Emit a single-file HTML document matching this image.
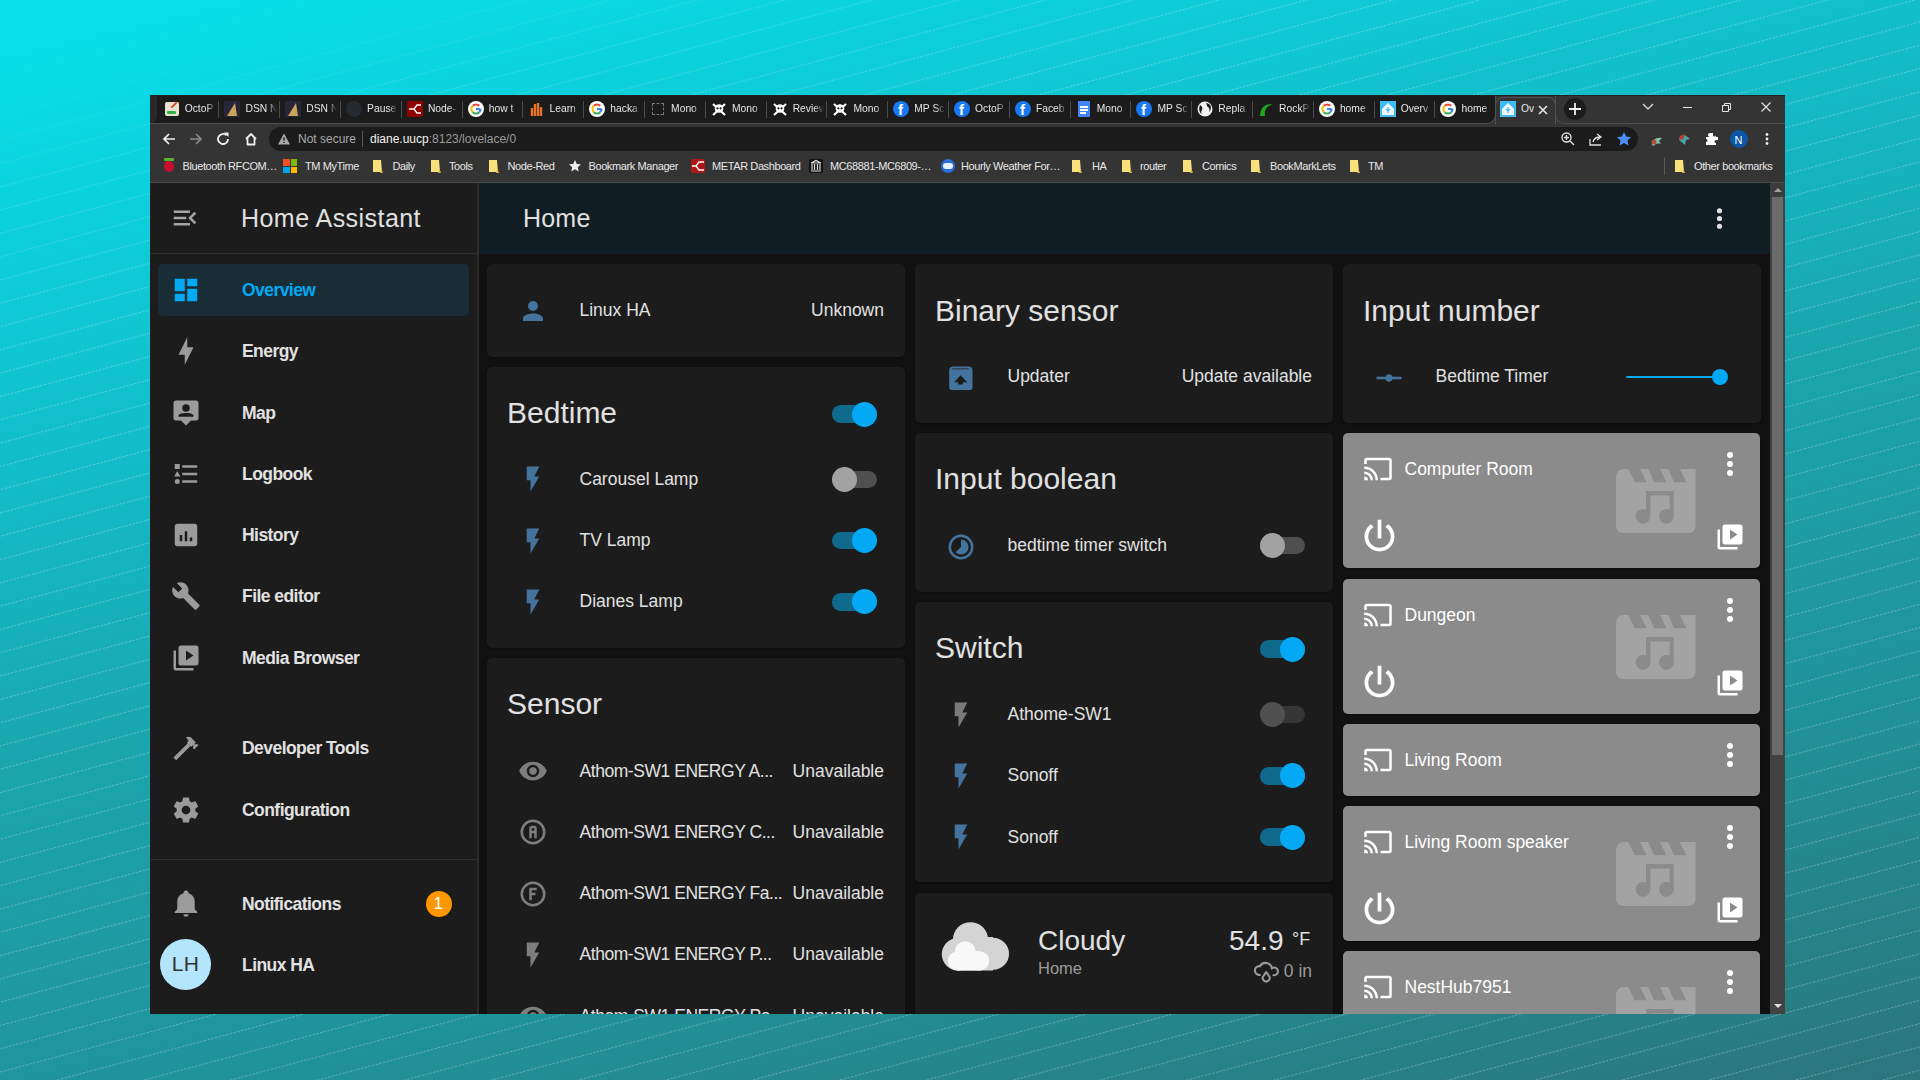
<!DOCTYPE html>
<html><head><meta charset="utf-8">
<style>
*{box-sizing:border-box;margin:0;padding:0}
html,body{width:1920px;height:1080px;overflow:hidden}
body{position:relative;font-family:"Liberation Sans",sans-serif;
background:linear-gradient(167deg,#07e1eb 0%,#08dde8 5%,#0fcad5 20%,#14b8c4 35.4%,#1aa6ae 50%,#1f9aa1 64.6%,#1f959d 71%,#2b767c 100%);}
.a{position:absolute}
.t{white-space:nowrap}
#lines{position:absolute;left:0;top:0;-webkit-mask-image:linear-gradient(165deg,transparent 5%,rgba(0,0,0,.6) 12%,#000 25%);mask-image:linear-gradient(165deg,transparent 5%,rgba(0,0,0,.6) 12%,#000 25%)}
#clip{position:absolute;left:0;top:0;width:1920px;height:1080px;clip-path:inset(183px 135px 66px 150px)}
</style></head><body>
<svg id="lines" width="1920" height="1080"><defs><pattern id="pl" width="3.8" height="22.5" patternUnits="userSpaceOnUse" patternTransform="rotate(-15)"><rect x="0" y="0" width="2.4" height="1.1" fill="rgba(255,255,255,0.27)"/></pattern></defs><rect width="1920" height="1080" fill="url(#pl)"/></svg>
<div class="a" style="left:150px;top:95px;width:1635px;height:919px;background:#343434;border-radius:0px;"></div><div class="a" style="left:150px;top:95px;width:1635px;height:1px;background:#2a1f1f;border-radius:0px;"></div><div class="a" style="left:150px;top:96px;width:1635px;height:28px;background:#343434;border-radius:0px;"></div><div class="a" style="left:150px;top:95px;width:1346px;height:29px;background:#1b1b1b;border-right:1px solid #505050;border-bottom:1px solid #505050;border-radius:0 0 9px 0"></div><div class="a" style="left:150px;top:95px;width:7px;height:28px;background:#2a2a2a;border-radius:0px;border-radius:0 0 7px 0"></div><div class="a" style="left:1555px;top:95px;width:230px;height:29px;background:#343434;border-left:1px solid #505050;border-bottom:1px solid #505050;border-radius:0 0 0 9px"></div><div class="a" style="left:1495px;top:97px;width:61px;height:27px;background:#343434;border:1px solid #505050;border-bottom:none;border-radius:8px 8px 0 0"></div><div class="a" style="left:150px;top:95px;width:1635px;height:1px;background:#2a1f1f;border-radius:0px;"></div><div class="a" style="left:165px;top:102px;width:14px;height:14px;background:#e8e2d0;border-radius:2px;"></div><div class="a" style="left:167px;top:111px;width:9px;height:3px;background:#2db34a;border-radius:1px;"></div><div class="a" style="left:170px;top:104px;width:8px;height:2px;background:#e24a2a;border-radius:1px;transform:rotate(-45deg)"></div><div class="a t" style="left:184.7px;top:103px;width:31px;overflow:hidden;font-size:10.3px;line-height:12px;color:#e6e6e6;-webkit-mask-image:linear-gradient(90deg,#000 70%,transparent)">OctoP</div><div class="a" style="left:218px;top:101px;width:1px;height:17px;background:#4a4a4a;border-radius:0px;"></div><div class="a" style="left:224px;top:101px;width:16px;height:16px;background:#2a2438;border-radius:1px;"></div><svg class="a" style="left:224px;top:101px" width="16" height="16"><path d="M3 15L11 2L13 15Z" fill="#c9a55a"/></svg><div class="a t" style="left:245.5px;top:103px;width:31px;overflow:hidden;font-size:10.3px;line-height:12px;color:#e6e6e6;-webkit-mask-image:linear-gradient(90deg,#000 70%,transparent)">DSN N</div><div class="a" style="left:279px;top:101px;width:1px;height:17px;background:#4a4a4a;border-radius:0px;"></div><div class="a" style="left:285px;top:101px;width:16px;height:16px;background:#2a2438;border-radius:1px;"></div><svg class="a" style="left:285px;top:101px" width="16" height="16"><path d="M3 15L11 2L13 15Z" fill="#c9a55a"/></svg><div class="a t" style="left:306.3px;top:103px;width:31px;overflow:hidden;font-size:10.3px;line-height:12px;color:#e6e6e6;-webkit-mask-image:linear-gradient(90deg,#000 70%,transparent)">DSN N</div><div class="a" style="left:340px;top:101px;width:1px;height:17px;background:#4a4a4a;border-radius:0px;"></div><div class="a" style="left:346px;top:101px;width:16px;height:16px;border-radius:8px;background:#242a30"></div><div class="a t" style="left:367.1px;top:103px;width:31px;overflow:hidden;font-size:10.3px;line-height:12px;color:#e6e6e6;-webkit-mask-image:linear-gradient(90deg,#000 70%,transparent)">Pause</div><div class="a" style="left:401px;top:101px;width:1px;height:17px;background:#4a4a4a;border-radius:0px;"></div><div class="a" style="left:407px;top:101px;width:16px;height:16px;background:#8f0000;border-radius:1px;"></div><svg class="a" style="left:407px;top:101px" width="16" height="16"><path d="M2 8H7L10 4H14M7 8L10 12H14" stroke="#fff" stroke-width="1.3" fill="none"/></svg><div class="a t" style="left:427.9px;top:103px;width:31px;overflow:hidden;font-size:10.3px;line-height:12px;color:#e6e6e6;-webkit-mask-image:linear-gradient(90deg,#000 70%,transparent)">Node-</div><div class="a" style="left:462px;top:101px;width:1px;height:17px;background:#4a4a4a;border-radius:0px;"></div><svg class="a" style="left:468px;top:101px" width="16" height="16" viewBox="0 0 16 16"><circle cx="8" cy="8" r="8" fill="#fff"/><g fill="none" stroke-width="2.2"><path d="M4.82 4.82A4.5 4.5 0 0 1 11.18 4.82" stroke="#ea4335"/><path d="M4.82 11.18A4.5 4.5 0 0 1 4.82 4.82" stroke="#fbbc05"/><path d="M11.18 11.18A4.5 4.5 0 0 1 4.82 11.18" stroke="#34a853"/><path d="M12.5 8A4.5 4.5 0 0 1 11.18 11.18M8 8H12.5" stroke="#4285f4"/></g></svg><div class="a t" style="left:488.7px;top:103px;width:31px;overflow:hidden;font-size:10.3px;line-height:12px;color:#e6e6e6;-webkit-mask-image:linear-gradient(90deg,#000 70%,transparent)">how t</div><div class="a" style="left:522px;top:101px;width:1px;height:17px;background:#4a4a4a;border-radius:0px;"></div><svg class="a" style="left:528px;top:101px" width="16" height="16"><path d="M4 15V7M7 15V3M10 15V2M13 15V6" stroke="#e8742a" stroke-width="2.4"/></svg><div class="a t" style="left:549.5px;top:103px;width:31px;overflow:hidden;font-size:10.3px;line-height:12px;color:#e6e6e6;-webkit-mask-image:linear-gradient(90deg,#000 70%,transparent)">Learn</div><div class="a" style="left:583px;top:101px;width:1px;height:17px;background:#4a4a4a;border-radius:0px;"></div><svg class="a" style="left:589px;top:101px" width="16" height="16" viewBox="0 0 16 16"><circle cx="8" cy="8" r="8" fill="#fff"/><g fill="none" stroke-width="2.2"><path d="M4.82 4.82A4.5 4.5 0 0 1 11.18 4.82" stroke="#ea4335"/><path d="M4.82 11.18A4.5 4.5 0 0 1 4.82 4.82" stroke="#fbbc05"/><path d="M11.18 11.18A4.5 4.5 0 0 1 4.82 11.18" stroke="#34a853"/><path d="M12.5 8A4.5 4.5 0 0 1 11.18 11.18M8 8H12.5" stroke="#4285f4"/></g></svg><div class="a t" style="left:610.3px;top:103px;width:31px;overflow:hidden;font-size:10.3px;line-height:12px;color:#e6e6e6;-webkit-mask-image:linear-gradient(90deg,#000 70%,transparent)">hacka</div><div class="a" style="left:644px;top:101px;width:1px;height:17px;background:#4a4a4a;border-radius:0px;"></div><div class="a" style="left:652px;top:103px;width:12px;height:12px;border:1px dashed #777"></div><div class="a t" style="left:671.1px;top:103px;width:31px;overflow:hidden;font-size:10.3px;line-height:12px;color:#e6e6e6;-webkit-mask-image:linear-gradient(90deg,#000 70%,transparent)">Mono</div><div class="a" style="left:705px;top:101px;width:1px;height:17px;background:#4a4a4a;border-radius:0px;"></div><svg class="a" style="left:711px;top:101px" width="16" height="16" viewBox="0 0 16 16"><path d="M2 3L14 14M14 3L2 14" stroke="#fff" stroke-width="2.2"/><circle cx="8" cy="7.5" r="4.3" fill="#fff"/><circle cx="6.4" cy="7.3" r="1.1" fill="#1b1b1b"/><circle cx="9.6" cy="7.3" r="1.1" fill="#1b1b1b"/></svg><div class="a t" style="left:731.9px;top:103px;width:31px;overflow:hidden;font-size:10.3px;line-height:12px;color:#e6e6e6;-webkit-mask-image:linear-gradient(90deg,#000 70%,transparent)">Mono</div><div class="a" style="left:766px;top:101px;width:1px;height:17px;background:#4a4a4a;border-radius:0px;"></div><svg class="a" style="left:772px;top:101px" width="16" height="16" viewBox="0 0 16 16"><path d="M2 3L14 14M14 3L2 14" stroke="#fff" stroke-width="2.2"/><circle cx="8" cy="7.5" r="4.3" fill="#fff"/><circle cx="6.4" cy="7.3" r="1.1" fill="#1b1b1b"/><circle cx="9.6" cy="7.3" r="1.1" fill="#1b1b1b"/></svg><div class="a t" style="left:792.7px;top:103px;width:31px;overflow:hidden;font-size:10.3px;line-height:12px;color:#e6e6e6;-webkit-mask-image:linear-gradient(90deg,#000 70%,transparent)">Review</div><div class="a" style="left:826px;top:101px;width:1px;height:17px;background:#4a4a4a;border-radius:0px;"></div><svg class="a" style="left:832px;top:101px" width="16" height="16" viewBox="0 0 16 16"><path d="M2 3L14 14M14 3L2 14" stroke="#fff" stroke-width="2.2"/><circle cx="8" cy="7.5" r="4.3" fill="#fff"/><circle cx="6.4" cy="7.3" r="1.1" fill="#1b1b1b"/><circle cx="9.6" cy="7.3" r="1.1" fill="#1b1b1b"/></svg><div class="a t" style="left:853.5px;top:103px;width:31px;overflow:hidden;font-size:10.3px;line-height:12px;color:#e6e6e6;-webkit-mask-image:linear-gradient(90deg,#000 70%,transparent)">Mono</div><div class="a" style="left:887px;top:101px;width:1px;height:17px;background:#4a4a4a;border-radius:0px;"></div><div class="a" style="left:893px;top:101px;width:16px;height:16px;border-radius:8px;background:#1877f2"></div><div class="a t" style="left:898px;top:102px;font-size:15px;line-height:16px;font-weight:700;color:#fff">f</div><div class="a t" style="left:914.3px;top:103px;width:31px;overflow:hidden;font-size:10.3px;line-height:12px;color:#e6e6e6;-webkit-mask-image:linear-gradient(90deg,#000 70%,transparent)">MP Sc</div><div class="a" style="left:948px;top:101px;width:1px;height:17px;background:#4a4a4a;border-radius:0px;"></div><div class="a" style="left:954px;top:101px;width:16px;height:16px;border-radius:8px;background:#1877f2"></div><div class="a t" style="left:959px;top:102px;font-size:15px;line-height:16px;font-weight:700;color:#fff">f</div><div class="a t" style="left:975.1px;top:103px;width:31px;overflow:hidden;font-size:10.3px;line-height:12px;color:#e6e6e6;-webkit-mask-image:linear-gradient(90deg,#000 70%,transparent)">OctoP</div><div class="a" style="left:1009px;top:101px;width:1px;height:17px;background:#4a4a4a;border-radius:0px;"></div><div class="a" style="left:1015px;top:101px;width:16px;height:16px;border-radius:8px;background:#1877f2"></div><div class="a t" style="left:1020px;top:102px;font-size:15px;line-height:16px;font-weight:700;color:#fff">f</div><div class="a t" style="left:1035.9px;top:103px;width:31px;overflow:hidden;font-size:10.3px;line-height:12px;color:#e6e6e6;-webkit-mask-image:linear-gradient(90deg,#000 70%,transparent)">Faceb</div><div class="a" style="left:1070px;top:101px;width:1px;height:17px;background:#4a4a4a;border-radius:0px;"></div><div class="a" style="left:1078px;top:101px;width:12px;height:16px;background:#4285f4;border-radius:1px;"></div><div class="a" style="left:1080px;top:106px;width:8px;height:1.5px;background:#fff;border-radius:0px;"></div><div class="a" style="left:1080px;top:109px;width:8px;height:1.5px;background:#fff;border-radius:0px;"></div><div class="a" style="left:1080px;top:112px;width:6px;height:1.5px;background:#fff;border-radius:0px;"></div><div class="a t" style="left:1096.7px;top:103px;width:31px;overflow:hidden;font-size:10.3px;line-height:12px;color:#e6e6e6;-webkit-mask-image:linear-gradient(90deg,#000 70%,transparent)">Mono</div><div class="a" style="left:1130px;top:101px;width:1px;height:17px;background:#4a4a4a;border-radius:0px;"></div><div class="a" style="left:1136px;top:101px;width:16px;height:16px;border-radius:8px;background:#1877f2"></div><div class="a t" style="left:1141px;top:102px;font-size:15px;line-height:16px;font-weight:700;color:#fff">f</div><div class="a t" style="left:1157.5px;top:103px;width:31px;overflow:hidden;font-size:10.3px;line-height:12px;color:#e6e6e6;-webkit-mask-image:linear-gradient(90deg,#000 70%,transparent)">MP Sc</div><div class="a" style="left:1191px;top:101px;width:1px;height:17px;background:#4a4a4a;border-radius:0px;"></div><svg class="a" style="left:1197px;top:101px" width="16" height="16" viewBox="0 0 16 16"><circle cx="8" cy="8" r="7.5" fill="#f2f2f2"/><path d="M3 4C5 5 6 7 5 9C4 10 4 12 5 13.5C3 12 1.5 9 2.5 5.5ZM9 2C10 3.5 9.5 5 11 6C12.5 7 13 9 12 11C13.5 10 14.5 7 13.5 4.5C12.5 3 11 2.2 9 2Z" fill="#1b1b1b"/></svg><div class="a t" style="left:1218.3px;top:103px;width:31px;overflow:hidden;font-size:10.3px;line-height:12px;color:#e6e6e6;-webkit-mask-image:linear-gradient(90deg,#000 70%,transparent)">Repla</div><div class="a" style="left:1252px;top:101px;width:1px;height:17px;background:#4a4a4a;border-radius:0px;"></div><svg class="a" style="left:1258px;top:101px" width="16" height="16"><path d="M2 15C2 6 9 1 15 4C9 4 6 9 7 15Z" fill="#1fa51f"/></svg><div class="a t" style="left:1279.1px;top:103px;width:31px;overflow:hidden;font-size:10.3px;line-height:12px;color:#e6e6e6;-webkit-mask-image:linear-gradient(90deg,#000 70%,transparent)">RockP</div><div class="a" style="left:1313px;top:101px;width:1px;height:17px;background:#4a4a4a;border-radius:0px;"></div><svg class="a" style="left:1319px;top:101px" width="16" height="16" viewBox="0 0 16 16"><circle cx="8" cy="8" r="8" fill="#fff"/><g fill="none" stroke-width="2.2"><path d="M4.82 4.82A4.5 4.5 0 0 1 11.18 4.82" stroke="#ea4335"/><path d="M4.82 11.18A4.5 4.5 0 0 1 4.82 4.82" stroke="#fbbc05"/><path d="M11.18 11.18A4.5 4.5 0 0 1 4.82 11.18" stroke="#34a853"/><path d="M12.5 8A4.5 4.5 0 0 1 11.18 11.18M8 8H12.5" stroke="#4285f4"/></g></svg><div class="a t" style="left:1339.9px;top:103px;width:31px;overflow:hidden;font-size:10.3px;line-height:12px;color:#e6e6e6;-webkit-mask-image:linear-gradient(90deg,#000 70%,transparent)">home</div><div class="a" style="left:1374px;top:101px;width:1px;height:17px;background:#4a4a4a;border-radius:0px;"></div><div class="a" style="left:1380px;top:101px;width:16px;height:16px;background:#41bdf5;border-radius:0px;"></div><svg class="a" style="left:1380px;top:101px" width="16" height="16"><path d="M8 2L14 8V14H2V8Z" fill="#f1f9ff"/><path d="M8 6V12M6 8L8 10L10 8" stroke="#41bdf5" stroke-width="1.2" fill="none"/></svg><div class="a t" style="left:1400.7px;top:103px;width:31px;overflow:hidden;font-size:10.3px;line-height:12px;color:#e6e6e6;-webkit-mask-image:linear-gradient(90deg,#000 70%,transparent)">Overv</div><div class="a" style="left:1434px;top:101px;width:1px;height:17px;background:#4a4a4a;border-radius:0px;"></div><svg class="a" style="left:1440px;top:101px" width="16" height="16" viewBox="0 0 16 16"><circle cx="8" cy="8" r="8" fill="#fff"/><g fill="none" stroke-width="2.2"><path d="M4.82 4.82A4.5 4.5 0 0 1 11.18 4.82" stroke="#ea4335"/><path d="M4.82 11.18A4.5 4.5 0 0 1 4.82 4.82" stroke="#fbbc05"/><path d="M11.18 11.18A4.5 4.5 0 0 1 4.82 11.18" stroke="#34a853"/><path d="M12.5 8A4.5 4.5 0 0 1 11.18 11.18M8 8H12.5" stroke="#4285f4"/></g></svg><div class="a t" style="left:1461.5px;top:103px;width:31px;overflow:hidden;font-size:10.3px;line-height:12px;color:#e6e6e6;-webkit-mask-image:linear-gradient(90deg,#000 70%,transparent)">home</div><div class="a" style="left:1500px;top:101px;width:16px;height:16px;background:#41bdf5;border-radius:0px;"></div><svg class="a" style="left:1500px;top:101px" width="16" height="16"><path d="M8 2L14 8V14H2V8Z" fill="#f1f9ff"/><path d="M8 6V12M6 8L8 10L10 8" stroke="#41bdf5" stroke-width="1.2" fill="none"/></svg><div class="a t" style="left:1521px;top:103px;width:13px;overflow:hidden;font-size:10.3px;line-height:12px;color:#e6e6e6">Ov</div><svg class="a" style="left:1536.50px;top:103.50px;" width="12" height="12" viewBox="0 0 12 12"><path d="M2 2L10 10M10 2L2 10" stroke="#e8e8e8" stroke-width="1.6"/></svg><div class="a" style="left:1563.5px;top:98px;width:22px;height:22px;background:#1b1b1b;border-radius:11px;"></div><svg class="a" style="left:1567.50px;top:102.00px;" width="14" height="14" viewBox="0 0 14 14"><path d="M7 1V13M1 7H13" stroke="#f0f0f0" stroke-width="1.8"/></svg><svg class="a" style="left:1641.50px;top:100.50px;" width="12" height="12" viewBox="0 0 12 12"><path d="M1 3L6 8L11 3" stroke="#d8d8d8" stroke-width="1.3" fill="none"/></svg><div class="a" style="left:1683px;top:107px;width:9px;height:1px;background:#e8e8e8;border-radius:0px;"></div><svg class="a" style="left:1720.00px;top:101.00px;" width="12" height="12" viewBox="0 0 12 12"><path d="M2.5 4.5H8.5V10.5H2.5Z M4.5 4.5V2.5H10.5V8.5H8.5" stroke="#e8e8e8" stroke-width="1" fill="none"/></svg><svg class="a" style="left:1759.50px;top:101.00px;" width="12" height="12" viewBox="0 0 12 12"><path d="M1.5 1.5L10.5 10.5M10.5 1.5L1.5 10.5" stroke="#e8e8e8" stroke-width="1.1"/></svg><svg class="a" style="left:161.00px;top:131.00px;" width="16" height="16" viewBox="0 0 16 16"><path d="M14 8H3M8 3L3 8L8 13" stroke="#f0f0f0" stroke-width="1.7" fill="none"/></svg><svg class="a" style="left:188.00px;top:131.00px;" width="16" height="16" viewBox="0 0 16 16"><path d="M2 8H13M8 3L13 8L8 13" stroke="#8a8a8a" stroke-width="1.7" fill="none"/></svg><svg class="a" style="left:215.00px;top:131.00px;" width="16" height="16" viewBox="0 0 16 16"><path d="M13 8A5 5 0 1 1 11.5 4.4" stroke="#f0f0f0" stroke-width="1.8" fill="none"/><path d="M9 1.5H13.5V6Z" fill="#f0f0f0"/></svg><svg class="a" style="left:242.50px;top:131.00px;" width="16" height="16" viewBox="0 0 16 16"><path d="M3 8L8 3L13 8M4.5 7V13.5H11.5V7" stroke="#f0f0f0" stroke-width="1.8" fill="none" stroke-linejoin="round"/></svg><div class="a" style="left:269px;top:127px;width:1369px;height:24px;background:#1b1b1b;border-radius:12px;"></div><svg class="a" style="left:277.00px;top:132.00px;" width="14" height="14" viewBox="0 0 14 14"><path d="M7 1.5L13 12.5H1Z" fill="#a8a8a8"/><path d="M7 5.5V8.5M7 10V11" stroke="#1e1e1e" stroke-width="1.5"/></svg><div class="a t" style="top:133.36px;font-size:12px;line-height:12px;color:#a9a9a9;font-weight:400;left:298px;">Not secure</div><div class="a" style="left:362px;top:131px;width:1px;height:16px;background:#5a5a5a;border-radius:0px;"></div><div class="a t" style="left:370px;top:133.3px;font-size:12px;line-height:12px;color:#f2f2f2">diane.uucp<span style="color:#9a9a9a">:8123/lovelace/0</span></div><svg class="a" style="left:1560.00px;top:131.00px;" width="16" height="16" viewBox="0 0 16 16"><circle cx="6.5" cy="6.5" r="4.5" stroke="#dedede" stroke-width="1.4" fill="none"/><path d="M10 10L14 14M6.5 4V9M4 6.5H9" stroke="#dedede" stroke-width="1.4"/></svg><svg class="a" style="left:1588.00px;top:131.00px;" width="16" height="16" viewBox="0 0 16 16"><path d="M2 8V14H13M5 11C6 7 9 6 12 6M9 3L13 6L9 9" stroke="#dedede" stroke-width="1.3" fill="none"/></svg><svg class="a" style="left:1615.50px;top:131.00px;" width="16" height="16" viewBox="0 0 16 16"><path d="M8 1L10.2 5.6L15 6.2L11.5 9.5L12.4 14.5L8 12L3.6 14.5L4.5 9.5L1 6.2L5.8 5.6Z" fill="#4e8cf7"/></svg><svg class="a" style="left:1648.50px;top:131.50px;" width="16" height="16" viewBox="0 0 16 16"><path d="M3 13C3 8 7 5 13 6L10 9L12 12C8 11 6 12 5 14Z" fill="#7cc4a8"/><circle cx="5" cy="10" r="2.5" fill="#b0503a"/></svg><svg class="a" style="left:1676.00px;top:131.00px;" width="16" height="16" viewBox="0 0 16 16"><path d="M3 9C3 5 6 3 9 4L14 8L10 9L9 14Z" fill="#4aa3a0"/><path d="M3 9C3 5 6 3 9 4L7 8Z" fill="#b83a2a"/></svg><svg class="a" style="left:1703.50px;top:131.00px;" width="16" height="16" viewBox="0 0 16 16"><path d="M6 2H9V4A1.5 1.5 0 0 0 12 4V6H14V9H12A1.5 1.5 0 0 0 12 12V14H2V11A1.5 1.5 0 0 0 2 8V6H6A1.5 1.5 0 0 1 6 2Z" fill="#fff"/></svg><div class="a" style="left:1730px;top:130px;width:18px;height:18px;background:#0b57a6;border-radius:9px;"></div><div class="a t" style="top:134.71px;font-size:11px;line-height:11px;color:#ffffff;font-weight:400;left:1734.5px;">N</div><svg class="a" style="left:1758.50px;top:131.00px;" width="16" height="16" viewBox="0 0 16 16"><circle cx="8" cy="3.5" r="1.4" fill="#eee"/><circle cx="8" cy="8" r="1.4" fill="#eee"/><circle cx="8" cy="12.5" r="1.4" fill="#eee"/></svg><div class="a" style="left:164px;top:161px;width:10px;height:11px;background:#c8102e;border-radius:5px;"></div><div class="a" style="left:164px;top:158px;width:10px;height:3px;background:#5bb12f;border-radius:1px;"></div><div class="a t" style="top:161.21px;font-size:11px;line-height:11px;color:#e8e8e8;font-weight:400;letter-spacing:-0.4px;left:182.5px;">Bluetooth RFCOM…</div><div class="a" style="left:283px;top:159px;width:6.5px;height:6.5px;background:#f25022;border-radius:0px;"></div><div class="a" style="left:290.5px;top:159px;width:6.5px;height:6.5px;background:#7fba00;border-radius:0px;"></div><div class="a" style="left:283px;top:166.5px;width:6.5px;height:6.5px;background:#00a4ef;border-radius:0px;"></div><div class="a" style="left:290.5px;top:166.5px;width:6.5px;height:6.5px;background:#ffb900;border-radius:0px;"></div><div class="a t" style="top:161.21px;font-size:11px;line-height:11px;color:#e8e8e8;font-weight:400;letter-spacing:-0.4px;left:305px;">TM MyTime</div><svg class="a" style="left:371px;top:159px" width="14" height="15" viewBox="0 0 14 15"><path d="M2 1H10L11 13H2Z" fill="#f9e07a"/><path d="M10.5 10L12 14H9Z" fill="#d9b94a"/></svg><div class="a t" style="top:161.21px;font-size:11px;line-height:11px;color:#e8e8e8;font-weight:400;letter-spacing:-0.4px;left:392.5px;">Daily</div><svg class="a" style="left:429px;top:159px" width="14" height="15" viewBox="0 0 14 15"><path d="M2 1H10L11 13H2Z" fill="#f9e07a"/><path d="M10.5 10L12 14H9Z" fill="#d9b94a"/></svg><div class="a t" style="top:161.21px;font-size:11px;line-height:11px;color:#e8e8e8;font-weight:400;letter-spacing:-0.4px;left:449px;">Tools</div><svg class="a" style="left:487px;top:159px" width="14" height="15" viewBox="0 0 14 15"><path d="M2 1H10L11 13H2Z" fill="#f9e07a"/><path d="M10.5 10L12 14H9Z" fill="#d9b94a"/></svg><div class="a t" style="top:161.21px;font-size:11px;line-height:11px;color:#e8e8e8;font-weight:400;letter-spacing:-0.4px;left:507.5px;">Node-Red</div><svg class="a" style="left:568.00px;top:159.00px;" width="14" height="14" viewBox="0 0 14 14"><path d="M7 1L8.8 5L13 5.3L9.8 8.2L10.7 12.5L7 10.3L3.3 12.5L4.2 8.2L1 5.3L5.2 5Z" fill="#eee"/></svg><div class="a t" style="top:161.21px;font-size:11px;line-height:11px;color:#e8e8e8;font-weight:400;letter-spacing:-0.4px;left:588.5px;">Bookmark Manager</div><div class="a" style="left:690.5px;top:159px;width:14px;height:14px;background:#b01818;border-radius:2px;"></div><svg class="a" style="left:690.50px;top:159.00px;" width="14" height="14" viewBox="0 0 14 14"><path d="M1 7H5L8 3H13M5 7L8 11H13" stroke="#fff" stroke-width="1.3" fill="none"/></svg><div class="a t" style="top:161.21px;font-size:11px;line-height:11px;color:#e8e8e8;font-weight:400;letter-spacing:-0.4px;left:712px;">METAR Dashboard</div><div class="a" style="left:809px;top:159px;width:14px;height:14px;background:#111;border-radius:1px;"></div><svg class="a" style="left:809.00px;top:159.00px;" width="14" height="14" viewBox="0 0 14 14"><path d="M2 4L7 1.5L12 4ZM3 5V11M5.5 5V11M8.5 5V11M11 5V11M2 12H12" stroke="#ddd" stroke-width="1.2" fill="none"/></svg><div class="a t" style="top:161.21px;font-size:11px;line-height:11px;color:#e8e8e8;font-weight:400;letter-spacing:-0.4px;left:830px;">MC68881-MC6809-…</div><div class="a" style="left:940.5px;top:159px;width:14px;height:14px;background:#2b6fd6;border-radius:7px;"></div><div class="a" style="left:942.5px;top:163px;width:10px;height:6px;background:#e8f0ff;border-radius:5px;"></div><div class="a t" style="top:161.21px;font-size:11px;line-height:11px;color:#e8e8e8;font-weight:400;letter-spacing:-0.4px;left:961px;">Hourly Weather For…</div><svg class="a" style="left:1070px;top:159px" width="14" height="15" viewBox="0 0 14 15"><path d="M2 1H10L11 13H2Z" fill="#f9e07a"/><path d="M10.5 10L12 14H9Z" fill="#d9b94a"/></svg><div class="a t" style="top:161.21px;font-size:11px;line-height:11px;color:#e8e8e8;font-weight:400;letter-spacing:-0.4px;left:1092px;">HA</div><svg class="a" style="left:1120px;top:159px" width="14" height="15" viewBox="0 0 14 15"><path d="M2 1H10L11 13H2Z" fill="#f9e07a"/><path d="M10.5 10L12 14H9Z" fill="#d9b94a"/></svg><div class="a t" style="top:161.21px;font-size:11px;line-height:11px;color:#e8e8e8;font-weight:400;letter-spacing:-0.4px;left:1140px;">router</div><svg class="a" style="left:1181px;top:159px" width="14" height="15" viewBox="0 0 14 15"><path d="M2 1H10L11 13H2Z" fill="#f9e07a"/><path d="M10.5 10L12 14H9Z" fill="#d9b94a"/></svg><div class="a t" style="top:161.21px;font-size:11px;line-height:11px;color:#e8e8e8;font-weight:400;letter-spacing:-0.4px;left:1202px;">Comics</div><svg class="a" style="left:1249px;top:159px" width="14" height="15" viewBox="0 0 14 15"><path d="M2 1H10L11 13H2Z" fill="#f9e07a"/><path d="M10.5 10L12 14H9Z" fill="#d9b94a"/></svg><div class="a t" style="top:161.21px;font-size:11px;line-height:11px;color:#e8e8e8;font-weight:400;letter-spacing:-0.4px;left:1270px;">BookMarkLets</div><svg class="a" style="left:1348px;top:159px" width="14" height="15" viewBox="0 0 14 15"><path d="M2 1H10L11 13H2Z" fill="#f9e07a"/><path d="M10.5 10L12 14H9Z" fill="#d9b94a"/></svg><div class="a t" style="top:161.21px;font-size:11px;line-height:11px;color:#e8e8e8;font-weight:400;letter-spacing:-0.4px;left:1368px;">TM</div><svg class="a" style="left:1673px;top:159px" width="14" height="15" viewBox="0 0 14 15"><path d="M2 1H10L11 13H2Z" fill="#f9e07a"/><path d="M10.5 10L12 14H9Z" fill="#d9b94a"/></svg><div class="a t" style="top:161.21px;font-size:11px;line-height:11px;color:#e8e8e8;font-weight:400;letter-spacing:-0.4px;left:1694px;">Other bookmarks</div><div class="a" style="left:1664px;top:158px;width:1px;height:17px;background:#5a5a5a;border-radius:0px;"></div><div class="a" style="left:150px;top:182px;width:1635px;height:1px;background:#4d4d4d;border-radius:0px;"></div><div id="clip"><div class="a" style="left:150px;top:183px;width:1620px;height:831px;background:#111111;border-radius:0px;"></div><div class="a" style="left:150px;top:183px;width:327px;height:831px;background:#1c1c1c;border-radius:0px;"></div><div class="a" style="left:477px;top:183px;width:2px;height:831px;background:#2b2b2b;border-radius:0px;"></div><div class="a" style="left:150px;top:253px;width:327px;height:1px;background:#2f2f2f;border-radius:0px;"></div><svg class="a" style="left:170.00px;top:202.60px;" width="30" height="30" viewBox="0 0 24 24"><path fill="#a5a5a5" fill-rule="nonzero" d="M21,15.61L19.59,17L14.58,12L19.59,7L21,8.39L17.44,12L21,15.61M3,6H16V8H3V6M3,13V11H13V13H3M3,18V16H16V18H3Z"/></svg><div class="a t" style="top:205.88px;font-size:25px;line-height:25px;color:#e1e1e1;font-weight:400;letter-spacing:0.45px;left:241px;">Home Assistant</div><div class="a" style="left:158px;top:264px;width:311px;height:51.5px;background:#192d36;border-radius:5px;"></div><svg class="a" style="left:171.00px;top:275.00px;" width="30" height="30" viewBox="0 0 24 24"><path fill="#03a9f4" fill-rule="nonzero" d="M13,3V9H21V3M13,21H21V11H13M3,21H11V15H3M3,13H11V3H3V13Z"/></svg><div class="a t" style="top:282.21px;font-size:17.5px;line-height:17.5px;color:#03a9f4;font-weight:700;letter-spacing:-0.55px;left:242px;">Overview</div><svg class="a" style="left:171.00px;top:336.20px;" width="30" height="30" viewBox="0 0 24 24"><path fill="#9b9b9b" fill-rule="nonzero" d="M11 15H6L13 1V9H18L11 23V15Z"/></svg><div class="a t" style="top:343.41px;font-size:17.5px;line-height:17.5px;color:#e1e1e1;font-weight:700;letter-spacing:-0.55px;left:242px;">Energy</div><svg class="a" style="left:171.00px;top:397.50px;" width="30" height="30" viewBox="0 0 24 24"><path fill="#9b9b9b" fill-rule="nonzero" d="M2,4A2,2 0 0,1 4,2H20A2,2 0 0,1 22,4V16A2,2 0 0,1 20,18H16L12,22L8,18H4A2,2 0 0,1 2,16V4M12,5A3,3 0 0,0 9,8A3,3 0 0,0 12,11A3,3 0 0,0 15,8A3,3 0 0,0 12,5M18,15V14C18,12.67 15.33,12 12,12C8.67,12 6,12.67 6,14V15H18Z"/></svg><div class="a t" style="top:404.71px;font-size:17.5px;line-height:17.5px;color:#e1e1e1;font-weight:700;letter-spacing:-0.55px;left:242px;">Map</div><svg class="a" style="left:171.00px;top:458.70px;" width="30" height="30" viewBox="0 0 24 24"><path fill="#9b9b9b" fill-rule="nonzero" d="M5,9.5L7.5,14H2.5L5,9.5M3,4H7V8H3V4M5,20A2,2 0 0,0 7,18A2,2 0 0,0 5,16A2,2 0 0,0 3,18A2,2 0 0,0 5,20M9,5V7H21V5H9M9,19H21V17H9V19M9,13H21V11H9V13Z"/></svg><div class="a t" style="top:465.91px;font-size:17.5px;line-height:17.5px;color:#e1e1e1;font-weight:700;letter-spacing:-0.55px;left:242px;">Logbook</div><svg class="a" style="left:171.00px;top:520.00px;" width="30" height="30" viewBox="0 0 24 24"><path fill="#9b9b9b" fill-rule="nonzero" d="M19 3H5C3.9 3 3 3.9 3 5V19C3 20.1 3.9 21 5 21H19C20.1 21 21 20.1 21 19V5C21 3.9 20.1 3 19 3M9 17H7V12H9V17M13 17H11V9H13V17M17 17H15V14H17V17Z"/></svg><div class="a t" style="top:527.21px;font-size:17.5px;line-height:17.5px;color:#e1e1e1;font-weight:700;letter-spacing:-0.55px;left:242px;">History</div><svg class="a" style="left:171.00px;top:581.20px;" width="30" height="30" viewBox="0 0 24 24"><path fill="#9b9b9b" fill-rule="nonzero" d="M22.7,19L13.6,9.9C14.5,7.6 14,4.9 12.1,3C10.1,1 7.1,0.6 4.7,1.7L9,6L6,9L1.6,4.7C0.4,7.1 0.9,10.1 2.9,12.1C4.8,14 7.5,14.5 9.8,13.6L18.9,22.7C19.3,23.1 19.9,23.1 20.3,22.7L22.6,20.4C23.1,20 23.1,19.3 22.7,19Z"/></svg><div class="a t" style="top:588.41px;font-size:17.5px;line-height:17.5px;color:#e1e1e1;font-weight:700;letter-spacing:-0.55px;left:242px;">File editor</div><svg class="a" style="left:171.00px;top:642.50px;" width="30" height="30" viewBox="0 0 24 24"><path fill="#9b9b9b" fill-rule="nonzero" d="M22,16V4A2,2 0 0,0 20,2H8A2,2 0 0,0 6,4V16A2,2 0 0,0 8,18H20A2,2 0 0,0 22,16M12,14V6L18,10L12,14M2,6V20A2,2 0 0,0 4,22H18V20H4V6H2Z"/></svg><div class="a t" style="top:649.71px;font-size:17.5px;line-height:17.5px;color:#e1e1e1;font-weight:700;letter-spacing:-0.55px;left:242px;">Media Browser</div><svg class="a" style="left:171.00px;top:733.20px;" width="30" height="30" viewBox="0 0 24 24"><path fill="#9b9b9b" fill-rule="nonzero" d="M2 19.63L13.43 8.2L12.72 7.5L14.14 6.07L12 3.89C13.2 2.7 15.09 2.7 16.27 3.89L19.87 7.5L18.45 8.91H21.29L22 9.62L18.45 13.21L17.74 12.5V9.62L16.27 11.04L15.56 10.33L4.13 21.76L2 19.63Z"/></svg><div class="a t" style="top:740.41px;font-size:17.5px;line-height:17.5px;color:#e1e1e1;font-weight:700;letter-spacing:-0.55px;left:242px;">Developer Tools</div><svg class="a" style="left:171.00px;top:794.60px;" width="30" height="30" viewBox="0 0 24 24"><path fill="#9b9b9b" fill-rule="nonzero" d="M12,15.5A3.5,3.5 0 0,1 8.5,12A3.5,3.5 0 0,1 12,8.5A3.5,3.5 0 0,1 15.5,12A3.5,3.5 0 0,1 12,15.5M19.43,12.97C19.47,12.65 19.5,12.33 19.5,12C19.5,11.67 19.47,11.34 19.43,11L21.54,9.37C21.73,9.22 21.78,8.95 21.66,8.73L19.66,5.27C19.54,5.05 19.27,4.96 19.05,5.05L16.56,6.05C16.04,5.66 15.5,5.32 14.87,5.07L14.5,2.42C14.46,2.18 14.25,2 14,2H10C9.75,2 9.54,2.18 9.5,2.42L9.13,5.07C8.5,5.32 7.96,5.66 7.44,6.05L4.95,5.05C4.73,4.96 4.46,5.05 4.34,5.27L2.34,8.73C2.21,8.95 2.27,9.22 2.46,9.37L4.57,11C4.53,11.34 4.5,11.67 4.5,12C4.5,12.33 4.53,12.65 4.57,12.97L2.46,14.63C2.27,14.78 2.21,15.05 2.34,15.27L4.34,18.73C4.46,18.95 4.73,19.03 4.95,18.95L7.44,17.94C7.96,18.34 8.5,18.68 9.13,18.93L9.5,21.58C9.54,21.82 9.75,22 10,22H14C14.25,22 14.46,21.82 14.5,21.58L14.87,18.93C15.5,18.67 16.04,18.34 16.56,17.94L19.05,18.95C19.27,19.03 19.54,18.95 19.66,18.73L21.66,15.27C21.78,15.05 21.73,14.78 21.54,14.63L19.43,12.97Z"/></svg><div class="a t" style="top:801.81px;font-size:17.5px;line-height:17.5px;color:#e1e1e1;font-weight:700;letter-spacing:-0.55px;left:242px;">Configuration</div><svg class="a" style="left:171.00px;top:888.30px;" width="30" height="30" viewBox="0 0 24 24"><path fill="#9b9b9b" fill-rule="nonzero" d="M21,19V20H3V19L5,17V11C5,7.9 7.03,5.17 10,4.29C10,4.19 10,4.1 10,4A2,2 0 0,1 12,2A2,2 0 0,1 14,4C14,4.1 14,4.19 14,4.29C16.97,5.17 19,7.9 19,11V17L21,19M14,21A2,2 0 0,1 12,23A2,2 0 0,1 10,21"/></svg><div class="a t" style="top:895.51px;font-size:17.5px;line-height:17.5px;color:#e1e1e1;font-weight:700;letter-spacing:-0.55px;left:242px;">Notifications</div><div class="a" style="left:150px;top:859px;width:327px;height:1px;background:#2f2f2f;border-radius:0px;"></div><div class="a" style="left:425.5px;top:890.5px;width:26px;height:26px;background:#ff9800;border-radius:13px;"></div><div class="a t" style="top:894.63px;font-size:17px;line-height:17px;color:#ffffff;font-weight:400;left:433.5px;">1</div><div class="a" style="left:160px;top:939px;width:51px;height:51px;background:#b3e5fc;border-radius:25.5px;"></div><div class="a t" style="left:160px;top:953px;width:51px;text-align:center;font-size:21px;line-height:22px;color:#333;letter-spacing:0.3px">LH</div><div class="a t" style="top:956.91px;font-size:17.5px;line-height:17.5px;color:#e1e1e1;font-weight:700;letter-spacing:-0.55px;left:242px;">Linux HA</div><div class="a" style="left:479px;top:183px;width:1291px;height:71px;background:#101e24;border-radius:0px;"></div><div class="a t" style="top:205.88px;font-size:25px;line-height:25px;color:#e1e1e1;font-weight:400;letter-spacing:0.2px;left:523px;">Home</div><svg class="a" style="left:1704.00px;top:203.00px;" width="31" height="31" viewBox="0 0 24 24"><path fill="#e1e1e1" fill-rule="nonzero" d="M12,16A2,2 0 0,1 14,18A2,2 0 0,1 12,20A2,2 0 0,1 10,18A2,2 0 0,1 12,16M12,10A2,2 0 0,1 14,12A2,2 0 0,1 12,14A2,2 0 0,1 10,12A2,2 0 0,1 12,10M12,4A2,2 0 0,1 14,6A2,2 0 0,1 12,8A2,2 0 0,1 10,6A2,2 0 0,1 12,4Z"/></svg><div class="a" style="left:1770px;top:183px;width:15px;height:831px;background:#424242;border-radius:0px;"></div><div class="a" style="left:1770px;top:183px;width:15px;height:14px;background:#3c3c3c;border-radius:0px;"></div><div class="a" style="left:1772px;top:197px;width:11px;height:558px;background:#6b6b6b;border-radius:0px;"></div><svg class="a" style="left:1772.50px;top:185.00px;" width="10" height="10" viewBox="0 0 10 10"><path d="M1 7L5 3L9 7Z" fill="#a0a0a0"/></svg><svg class="a" style="left:1772.50px;top:1001.00px;" width="10" height="10" viewBox="0 0 10 10"><path d="M1 3L5 7L9 3Z" fill="#e0e0e0"/></svg><div class="a" style="left:487px;top:264px;width:418px;height:93px;background:#1c1c1c;border-radius:5px;box-shadow:0 1px 2px rgba(0,0,0,.35)"></div><svg class="a" style="left:518.00px;top:295.60px;" width="30" height="30" viewBox="0 0 24 24"><path fill="#44739e" fill-rule="nonzero" d="M12,4A4,4 0 0,1 16,8A4,4 0 0,1 12,12A4,4 0 0,1 8,8A4,4 0 0,1 12,4M12,14C16.42,14 20,15.79 20,18V20H4V18C4,15.79 7.58,14 12,14Z"/></svg><div class="a t" style="top:302.11px;font-size:17.5px;line-height:17.5px;color:#e1e1e1;font-weight:400;left:579.5px;">Linux HA</div><div class="a t" style="top:302.11px;font-size:17.5px;line-height:17.5px;color:#e1e1e1;font-weight:400;right:1036px;">Unknown</div><div class="a" style="left:487px;top:367px;width:418px;height:281px;background:#1c1c1c;border-radius:5px;box-shadow:0 1px 2px rgba(0,0,0,.35)"></div><div class="a t" style="top:397.65px;font-size:30px;line-height:30px;color:#e1e1e1;font-weight:400;left:507px;">Bedtime</div><div class="a" style="left:832px;top:405.25px;width:45px;height:17.5px;background:#106a8e;border-radius:8.75px;"></div><div class="a" style="left:852px;top:401.5px;width:25px;height:25px;background:#03a9f4;border-radius:12.5px;"></div><svg class="a" style="left:518.00px;top:464.30px;" width="30" height="30" viewBox="0 0 24 24"><path fill="#44739e" fill-rule="nonzero" d="M7,2V13H10V22L17,10H13L17,2H7Z"/></svg><div class="a t" style="top:470.81px;font-size:17.5px;line-height:17.5px;color:#e1e1e1;font-weight:400;left:579.5px;">Carousel Lamp</div><div class="a" style="left:832px;top:470.55px;width:45px;height:17.5px;background:#4f4f4f;border-radius:8.75px;"></div><div class="a" style="left:832px;top:466.8px;width:25px;height:25px;background:#a2a2a2;border-radius:12.5px;"></div><svg class="a" style="left:518.00px;top:525.50px;" width="30" height="30" viewBox="0 0 24 24"><path fill="#44739e" fill-rule="nonzero" d="M7,2V13H10V22L17,10H13L17,2H7Z"/></svg><div class="a t" style="top:532.01px;font-size:17.5px;line-height:17.5px;color:#e1e1e1;font-weight:400;left:579.5px;">TV Lamp</div><div class="a" style="left:832px;top:531.75px;width:45px;height:17.5px;background:#106a8e;border-radius:8.75px;"></div><div class="a" style="left:852px;top:528.0px;width:25px;height:25px;background:#03a9f4;border-radius:12.5px;"></div><svg class="a" style="left:518.00px;top:586.80px;" width="30" height="30" viewBox="0 0 24 24"><path fill="#44739e" fill-rule="nonzero" d="M7,2V13H10V22L17,10H13L17,2H7Z"/></svg><div class="a t" style="top:593.31px;font-size:17.5px;line-height:17.5px;color:#e1e1e1;font-weight:400;left:579.5px;">Dianes Lamp</div><div class="a" style="left:832px;top:593.05px;width:45px;height:17.5px;background:#106a8e;border-radius:8.75px;"></div><div class="a" style="left:852px;top:589.3px;width:25px;height:25px;background:#03a9f4;border-radius:12.5px;"></div><div class="a" style="left:487px;top:658px;width:418px;height:400px;background:#1c1c1c;border-radius:5px;box-shadow:0 1px 2px rgba(0,0,0,.35)"></div><div class="a t" style="top:688.65px;font-size:30px;line-height:30px;color:#e1e1e1;font-weight:400;left:507px;">Sensor</div><svg class="a" style="left:518.00px;top:756.20px;" width="30" height="30" viewBox="0 0 24 24"><path fill="#7e7e7e" fill-rule="nonzero" d="M12,9A3,3 0 0,0 9,12A3,3 0 0,0 12,15A3,3 0 0,0 15,12A3,3 0 0,0 12,9M12,17A5,5 0 0,1 7,12A5,5 0 0,1 12,7A5,5 0 0,1 17,12A5,5 0 0,1 12,17M12,4.5C7,4.5 2.73,7.61 1,12C2.73,16.39 7,19.5 12,19.5C17,19.5 21.27,16.39 23,12C21.27,7.61 17,4.5 12,4.5Z"/></svg><div class="a t" style="top:762.71px;font-size:17.5px;line-height:17.5px;color:#e1e1e1;font-weight:400;letter-spacing:-0.45px;left:579.5px;">Athom-SW1 ENERGY A...</div><div class="a t" style="top:762.71px;font-size:17.5px;line-height:17.5px;color:#e1e1e1;font-weight:400;right:1036px;">Unavailable</div><svg class="a" style="left:518.00px;top:817.45px;" width="30" height="30" viewBox="0 0 24 24"><path fill="#7e7e7e" fill-rule="evenodd" d="M12,2A10,10 0 0,0 2,12A10,10 0 0,0 12,22A10,10 0 0,0 22,12A10,10 0 0,0 12,2M12,4A8,8 0 0,1 20,12A8,8 0 0,1 12,20A8,8 0 0,1 4,12A8,8 0 0,1 12,4ZM11,7H13A2,2 0 0,1 15,9V17H13V13H11V17H9V9A2,2 0 0,1 11,7M11,9V11H13V9H11Z"/></svg><div class="a t" style="top:823.96px;font-size:17.5px;line-height:17.5px;color:#e1e1e1;font-weight:400;letter-spacing:-0.45px;left:579.5px;">Athom-SW1 ENERGY C...</div><div class="a t" style="top:823.96px;font-size:17.5px;line-height:17.5px;color:#e1e1e1;font-weight:400;right:1036px;">Unavailable</div><svg class="a" style="left:518.00px;top:878.70px;" width="30" height="30" viewBox="0 0 24 24"><path fill="#7e7e7e" fill-rule="evenodd" d="M12,2A10,10 0 0,0 2,12A10,10 0 0,0 12,22A10,10 0 0,0 22,12A10,10 0 0,0 12,2M12,4A8,8 0 0,1 20,12A8,8 0 0,1 12,20A8,8 0 0,1 4,12A8,8 0 0,1 12,4ZM9,7H15V9H11V11H14V13H11V17H9V7Z"/></svg><div class="a t" style="top:885.21px;font-size:17.5px;line-height:17.5px;color:#e1e1e1;font-weight:400;letter-spacing:-0.45px;left:579.5px;">Athom-SW1 ENERGY Fa...</div><div class="a t" style="top:885.21px;font-size:17.5px;line-height:17.5px;color:#e1e1e1;font-weight:400;right:1036px;">Unavailable</div><svg class="a" style="left:518.00px;top:939.95px;" width="30" height="30" viewBox="0 0 24 24"><path fill="#7e7e7e" fill-rule="nonzero" d="M7,2V13H10V22L17,10H13L17,2H7Z"/></svg><div class="a t" style="top:946.46px;font-size:17.5px;line-height:17.5px;color:#e1e1e1;font-weight:400;letter-spacing:-0.45px;left:579.5px;">Athom-SW1 ENERGY P...</div><div class="a t" style="top:946.46px;font-size:17.5px;line-height:17.5px;color:#e1e1e1;font-weight:400;right:1036px;">Unavailable</div><svg class="a" style="left:518.00px;top:1001.20px;" width="30" height="30" viewBox="0 0 24 24"><path fill="#7e7e7e" fill-rule="nonzero" d="M12,9A3,3 0 0,0 9,12A3,3 0 0,0 12,15A3,3 0 0,0 15,12A3,3 0 0,0 12,9M12,17A5,5 0 0,1 7,12A5,5 0 0,1 12,7A5,5 0 0,1 17,12A5,5 0 0,1 12,17M12,4.5C7,4.5 2.73,7.61 1,12C2.73,16.39 7,19.5 12,19.5C17,19.5 21.27,16.39 23,12C21.27,7.61 17,4.5 12,4.5Z"/></svg><div class="a t" style="top:1007.71px;font-size:17.5px;line-height:17.5px;color:#e1e1e1;font-weight:400;letter-spacing:-0.45px;left:579.5px;">Athom-SW1 ENERGY Po...</div><div class="a t" style="top:1007.71px;font-size:17.5px;line-height:17.5px;color:#e1e1e1;font-weight:400;right:1036px;">Unavailable</div><div class="a" style="left:915px;top:264px;width:418px;height:159px;background:#1c1c1c;border-radius:5px;box-shadow:0 1px 2px rgba(0,0,0,.35)"></div><div class="a t" style="top:295.65px;font-size:30px;line-height:30px;color:#e1e1e1;font-weight:400;left:935px;">Binary sensor</div><svg class="a" style="left:946.00px;top:362.60px;" width="30" height="30" viewBox="0 0 24 24"><path d="M2.56 5.9A3.2 3.2 0 0 1 5.76 2.72H18A3.2 3.2 0 0 1 21.2 5.9V19.6A2 2 0 0 1 19.2 21.6H4.56A2 2 0 0 1 2.56 19.6Z" fill="#44739e"/><rect x="5.04" y="4.24" width="13.2" height="0.9" fill="#1c1c1c" opacity=".7"/><path d="M11.7 9.76L17.04 15.3H13.52V17.28H9.68V15.3H6.56Z" fill="#1c1c1c"/></svg><div class="a t" style="top:367.71px;font-size:17.5px;line-height:17.5px;color:#e1e1e1;font-weight:400;left:1007.5px;">Updater</div><div class="a t" style="top:367.71px;font-size:17.5px;line-height:17.5px;color:#e1e1e1;font-weight:400;right:608px;">Update available</div><div class="a" style="left:915px;top:433px;width:418px;height:159px;background:#1c1c1c;border-radius:5px;box-shadow:0 1px 2px rgba(0,0,0,.35)"></div><div class="a t" style="top:463.65px;font-size:30px;line-height:30px;color:#e1e1e1;font-weight:400;left:935px;">Input boolean</div><div class="a t" style="top:536.81px;font-size:17.5px;line-height:17.5px;color:#e1e1e1;font-weight:400;left:1007.5px;">bedtime timer switch</div><div class="a" style="left:1260px;top:536.55px;width:45px;height:17.5px;background:#4f4f4f;border-radius:8.75px;"></div><div class="a" style="left:1260px;top:532.8px;width:25px;height:25px;background:#a2a2a2;border-radius:12.5px;"></div><svg class="a" style="left:946.00px;top:531.60px;" width="30" height="30" viewBox="0 0 24 24"><path fill="#44739e" fill-rule="nonzero" d="M16.24,7.75C15.07,6.58 13.53,6 12,6V12L7.76,16.24C10.1,18.58 13.9,18.58 16.24,16.24C18.59,13.9 18.59,10.1 16.24,7.75M12,2A10,10 0 0,0 2,12A10,10 0 0,0 12,22A10,10 0 0,0 22,12A10,10 0 0,0 12,2M12,20A8,8 0 0,1 4,12A8,8 0 0,1 12,4A8,8 0 0,1 20,12A8,8 0 0,1 12,20Z"/></svg><div class="a" style="left:915px;top:602px;width:418px;height:280px;background:#1c1c1c;border-radius:5px;box-shadow:0 1px 2px rgba(0,0,0,.35)"></div><div class="a t" style="top:632.65px;font-size:30px;line-height:30px;color:#e1e1e1;font-weight:400;left:935px;">Switch</div><div class="a" style="left:1260px;top:640.25px;width:45px;height:17.5px;background:#106a8e;border-radius:8.75px;"></div><div class="a" style="left:1280px;top:636.5px;width:25px;height:25px;background:#03a9f4;border-radius:12.5px;"></div><svg class="a" style="left:946.00px;top:699.50px;" width="30" height="30" viewBox="0 0 24 24"><path fill="#7a7a7a" fill-rule="nonzero" d="M7,2V13H10V22L17,10H13L17,2H7Z"/></svg><div class="a t" style="top:706.01px;font-size:17.5px;line-height:17.5px;color:#e1e1e1;font-weight:400;left:1007.5px;">Athome-SW1</div><div class="a" style="left:1260px;top:705.75px;width:45px;height:17.5px;background:#363636;border-radius:8.75px;"></div><div class="a" style="left:1260px;top:702.0px;width:25px;height:25px;background:#505050;border-radius:12.5px;"></div><svg class="a" style="left:946.00px;top:760.80px;" width="30" height="30" viewBox="0 0 24 24"><path fill="#44739e" fill-rule="nonzero" d="M7,2V13H10V22L17,10H13L17,2H7Z"/></svg><div class="a t" style="top:767.31px;font-size:17.5px;line-height:17.5px;color:#e1e1e1;font-weight:400;left:1007.5px;">Sonoff</div><div class="a" style="left:1260px;top:767.05px;width:45px;height:17.5px;background:#106a8e;border-radius:8.75px;"></div><div class="a" style="left:1280px;top:763.3px;width:25px;height:25px;background:#03a9f4;border-radius:12.5px;"></div><svg class="a" style="left:946.00px;top:822.00px;" width="30" height="30" viewBox="0 0 24 24"><path fill="#44739e" fill-rule="nonzero" d="M7,2V13H10V22L17,10H13L17,2H7Z"/></svg><div class="a t" style="top:828.51px;font-size:17.5px;line-height:17.5px;color:#e1e1e1;font-weight:400;left:1007.5px;">Sonoff</div><div class="a" style="left:1260px;top:828.25px;width:45px;height:17.5px;background:#106a8e;border-radius:8.75px;"></div><div class="a" style="left:1280px;top:824.5px;width:25px;height:25px;background:#03a9f4;border-radius:12.5px;"></div><div class="a" style="left:915px;top:893px;width:418px;height:200px;background:#1c1c1c;border-radius:5px;box-shadow:0 1px 2px rgba(0,0,0,.35)"></div><svg class="a" style="left:935px;top:915px" width="80" height="60" viewBox="0 0 80 60"><g fill="#d4d4d4"><circle cx="23" cy="39.3" r="16.2"/><circle cx="35.5" cy="24.8" r="17.6"/><circle cx="58" cy="38.8" r="16"/><rect x="23" y="22" width="35" height="33.5"/></g><g fill="#f9f9f9"><circle cx="22.3" cy="46" r="9.5"/><circle cx="30.3" cy="36.5" r="10.3"/><circle cx="44.7" cy="45.8" r="9.6"/><rect x="22" y="36" width="23" height="19.5"/></g></svg><div class="a t" style="top:927.14px;font-size:28px;line-height:28px;color:#e1e1e1;font-weight:400;left:1038px;">Cloudy</div><div class="a t" style="top:959.76px;font-size:16.5px;line-height:16.5px;color:#9b9b9b;font-weight:400;left:1038px;">Home</div><div class="a t" style="top:927.14px;font-size:28px;line-height:28px;color:#e1e1e1;font-weight:400;right:636.5px;">54.9</div><div class="a t" style="top:929.59px;font-size:18px;line-height:18px;color:#e1e1e1;font-weight:400;left:1292px;">°F</div><svg class="a" style="left:1253.30px;top:959.00px;" width="26" height="26" viewBox="0 0 24 24"><path d="M7 14.6A4.1 4.1 0 1 1 6.4 6.6A6 6 0 0 1 17.5 8.5A3.55 3.55 0 1 1 18.1 14.7" stroke="#9b9b9b" stroke-width="1.9" fill="none"/><path d="M12.2 12L14.65 15.5A3.2 3.2 0 1 1 9.75 15.5Z" stroke="#9b9b9b" stroke-width="1.9" fill="none" stroke-linejoin="round"/></svg><div class="a t" style="top:963.41px;font-size:17.5px;line-height:17.5px;color:#9b9b9b;font-weight:400;right:608px;">0 in</div><div class="a" style="left:1343px;top:264px;width:418px;height:159px;background:#1c1c1c;border-radius:5px;box-shadow:0 1px 2px rgba(0,0,0,.35)"></div><div class="a t" style="top:295.65px;font-size:30px;line-height:30px;color:#e1e1e1;font-weight:400;left:1363px;">Input number</div><svg class="a" style="left:1374.00px;top:362.50px;" width="30" height="30" viewBox="0 0 24 24"><path fill="#44739e" fill-rule="nonzero" d="M2 11H9.17C9.58 9.83 10.69 9 12 9S14.42 9.83 14.83 11H22V13H14.83C14.42 14.17 13.31 15 12 15S9.58 14.17 9.17 13H2V11Z"/></svg><div class="a t" style="top:367.91px;font-size:17.5px;line-height:17.5px;color:#e1e1e1;font-weight:400;left:1435.5px;">Bedtime Timer</div><div class="a" style="left:1625.5px;top:375.8px;width:94px;height:2.5px;background:#03a9f4;border-radius:1px;"></div><div class="a" style="left:1711.5px;top:369px;width:16px;height:16px;background:#03a9f4;border-radius:8px;"></div><div class="a" style="left:1343px;top:433px;width:417px;height:135px;background:#8b8b8b;border-radius:5px;box-shadow:0 1px 2px rgba(0,0,0,.35)"></div><svg class="a" style="left:1363.00px;top:453.75px;" width="30" height="30" viewBox="0 0 24 24"><path fill="#ffffff" fill-rule="nonzero" d="M1,10V12A9,9 0 0,1 10,21H12C12,14.92 7.07,10 1,10M1,14V16A5,5 0 0,1 6,21H8A7,7 0 0,0 1,14M1,18V21H4A3,3 0 0,0 1,18M21,3H3C1.89,3 1,3.89 1,5V8H3V5H21V19H14V21H21A2,2 0 0,0 23,19V5C23,3.89 22.1,3 21,3Z"/></svg><div class="a t" style="top:460.71px;font-size:17.5px;line-height:17.5px;color:#ffffff;font-weight:400;left:1404.5px;">Computer Room</div><svg class="a" style="left:1711.70px;top:446.00px;" width="36" height="36" viewBox="0 0 24 24"><path fill="#ffffff" fill-rule="nonzero" d="M12,16A2,2 0 0,1 14,18A2,2 0 0,1 12,20A2,2 0 0,1 10,18A2,2 0 0,1 12,16M12,10A2,2 0 0,1 14,12A2,2 0 0,1 12,14A2,2 0 0,1 10,12A2,2 0 0,1 12,10M12,4A2,2 0 0,1 14,6A2,2 0 0,1 12,8A2,2 0 0,1 10,6A2,2 0 0,1 12,4Z"/></svg><svg class="a" style="left:1606px;top:460px" width="100" height="80" viewBox="0 0 100 80"><path d="M10 17A8 8 0 0 1 18 9H89.6V66A7 7 0 0 1 82.6 73H17A7 7 0 0 1 10 66Z" fill="#a3a3a3"/><path d="M22.2 9L34 9L40.7 22.2L28.9 22.2ZM42.2 9L54 9L60.4 22.2L48.1 22.2ZM62.2 9L73.7 9L80.4 22.2L68.1 22.2ZM40 31.1H67.8V56.3H63.7V35.6H44.4V56.3H40Z" fill="#8b8b8b"/><circle cx="37" cy="56.3" r="7.4" fill="#8b8b8b"/><circle cx="60.4" cy="56.3" r="7.4" fill="#8b8b8b"/></svg><svg class="a" style="left:1357.00px;top:514.00px;" width="45" height="45" viewBox="0 0 24 24"><path fill="#ffffff" d="M16.56,5.44L15.11,6.89C16.84,7.94 18,9.83 18,12A6,6 0 0,1 12,18A6,6 0 0,1 6,12C6,9.83 7.16,7.94 8.88,6.88L7.44,5.44C5.36,6.88 4,9.28 4,12A8,8 0 0,0 12,20A8,8 0 0,0 20,12C20,9.28 18.64,6.88 16.56,5.44M13,3H11V13H13"/></svg><svg class="a" style="left:1715.00px;top:522.00px;" width="30" height="30" viewBox="0 0 24 24"><path fill="#ffffff" fill-rule="nonzero" d="M22,16V4A2,2 0 0,0 20,2H8A2,2 0 0,0 6,4V16A2,2 0 0,0 8,18H20A2,2 0 0,0 22,16M12,14V6L18,10L12,14M2,6V20A2,2 0 0,0 4,22H18V20H4V6H2Z"/></svg><div class="a" style="left:1343px;top:579px;width:417px;height:135px;background:#8b8b8b;border-radius:5px;box-shadow:0 1px 2px rgba(0,0,0,.35)"></div><svg class="a" style="left:1363.00px;top:599.75px;" width="30" height="30" viewBox="0 0 24 24"><path fill="#ffffff" fill-rule="nonzero" d="M1,10V12A9,9 0 0,1 10,21H12C12,14.92 7.07,10 1,10M1,14V16A5,5 0 0,1 6,21H8A7,7 0 0,0 1,14M1,18V21H4A3,3 0 0,0 1,18M21,3H3C1.89,3 1,3.89 1,5V8H3V5H21V19H14V21H21A2,2 0 0,0 23,19V5C23,3.89 22.1,3 21,3Z"/></svg><div class="a t" style="top:606.71px;font-size:17.5px;line-height:17.5px;color:#ffffff;font-weight:400;left:1404.5px;">Dungeon</div><svg class="a" style="left:1711.70px;top:592.00px;" width="36" height="36" viewBox="0 0 24 24"><path fill="#ffffff" fill-rule="nonzero" d="M12,16A2,2 0 0,1 14,18A2,2 0 0,1 12,20A2,2 0 0,1 10,18A2,2 0 0,1 12,16M12,10A2,2 0 0,1 14,12A2,2 0 0,1 12,14A2,2 0 0,1 10,12A2,2 0 0,1 12,10M12,4A2,2 0 0,1 14,6A2,2 0 0,1 12,8A2,2 0 0,1 10,6A2,2 0 0,1 12,4Z"/></svg><svg class="a" style="left:1606px;top:606px" width="100" height="80" viewBox="0 0 100 80"><path d="M10 17A8 8 0 0 1 18 9H89.6V66A7 7 0 0 1 82.6 73H17A7 7 0 0 1 10 66Z" fill="#a3a3a3"/><path d="M22.2 9L34 9L40.7 22.2L28.9 22.2ZM42.2 9L54 9L60.4 22.2L48.1 22.2ZM62.2 9L73.7 9L80.4 22.2L68.1 22.2ZM40 31.1H67.8V56.3H63.7V35.6H44.4V56.3H40Z" fill="#8b8b8b"/><circle cx="37" cy="56.3" r="7.4" fill="#8b8b8b"/><circle cx="60.4" cy="56.3" r="7.4" fill="#8b8b8b"/></svg><svg class="a" style="left:1357.00px;top:660.00px;" width="45" height="45" viewBox="0 0 24 24"><path fill="#ffffff" d="M16.56,5.44L15.11,6.89C16.84,7.94 18,9.83 18,12A6,6 0 0,1 12,18A6,6 0 0,1 6,12C6,9.83 7.16,7.94 8.88,6.88L7.44,5.44C5.36,6.88 4,9.28 4,12A8,8 0 0,0 12,20A8,8 0 0,0 20,12C20,9.28 18.64,6.88 16.56,5.44M13,3H11V13H13"/></svg><svg class="a" style="left:1715.00px;top:668.00px;" width="30" height="30" viewBox="0 0 24 24"><path fill="#ffffff" fill-rule="nonzero" d="M22,16V4A2,2 0 0,0 20,2H8A2,2 0 0,0 6,4V16A2,2 0 0,0 8,18H20A2,2 0 0,0 22,16M12,14V6L18,10L12,14M2,6V20A2,2 0 0,0 4,22H18V20H4V6H2Z"/></svg><div class="a" style="left:1343px;top:724px;width:417px;height:72px;background:#8b8b8b;border-radius:5px;box-shadow:0 1px 2px rgba(0,0,0,.35)"></div><svg class="a" style="left:1363.00px;top:744.75px;" width="30" height="30" viewBox="0 0 24 24"><path fill="#ffffff" fill-rule="nonzero" d="M1,10V12A9,9 0 0,1 10,21H12C12,14.92 7.07,10 1,10M1,14V16A5,5 0 0,1 6,21H8A7,7 0 0,0 1,14M1,18V21H4A3,3 0 0,0 1,18M21,3H3C1.89,3 1,3.89 1,5V8H3V5H21V19H14V21H21A2,2 0 0,0 23,19V5C23,3.89 22.1,3 21,3Z"/></svg><div class="a t" style="top:751.71px;font-size:17.5px;line-height:17.5px;color:#ffffff;font-weight:400;left:1404.5px;">Living Room</div><svg class="a" style="left:1711.70px;top:737.00px;" width="36" height="36" viewBox="0 0 24 24"><path fill="#ffffff" fill-rule="nonzero" d="M12,16A2,2 0 0,1 14,18A2,2 0 0,1 12,20A2,2 0 0,1 10,18A2,2 0 0,1 12,16M12,10A2,2 0 0,1 14,12A2,2 0 0,1 12,14A2,2 0 0,1 10,12A2,2 0 0,1 12,10M12,4A2,2 0 0,1 14,6A2,2 0 0,1 12,8A2,2 0 0,1 10,6A2,2 0 0,1 12,4Z"/></svg><div class="a" style="left:1343px;top:806px;width:417px;height:135px;background:#8b8b8b;border-radius:5px;box-shadow:0 1px 2px rgba(0,0,0,.35)"></div><svg class="a" style="left:1363.00px;top:826.75px;" width="30" height="30" viewBox="0 0 24 24"><path fill="#ffffff" fill-rule="nonzero" d="M1,10V12A9,9 0 0,1 10,21H12C12,14.92 7.07,10 1,10M1,14V16A5,5 0 0,1 6,21H8A7,7 0 0,0 1,14M1,18V21H4A3,3 0 0,0 1,18M21,3H3C1.89,3 1,3.89 1,5V8H3V5H21V19H14V21H21A2,2 0 0,0 23,19V5C23,3.89 22.1,3 21,3Z"/></svg><div class="a t" style="top:833.71px;font-size:17.5px;line-height:17.5px;color:#ffffff;font-weight:400;left:1404.5px;">Living Room speaker</div><svg class="a" style="left:1711.70px;top:819.00px;" width="36" height="36" viewBox="0 0 24 24"><path fill="#ffffff" fill-rule="nonzero" d="M12,16A2,2 0 0,1 14,18A2,2 0 0,1 12,20A2,2 0 0,1 10,18A2,2 0 0,1 12,16M12,10A2,2 0 0,1 14,12A2,2 0 0,1 12,14A2,2 0 0,1 10,12A2,2 0 0,1 12,10M12,4A2,2 0 0,1 14,6A2,2 0 0,1 12,8A2,2 0 0,1 10,6A2,2 0 0,1 12,4Z"/></svg><svg class="a" style="left:1606px;top:833px" width="100" height="80" viewBox="0 0 100 80"><path d="M10 17A8 8 0 0 1 18 9H89.6V66A7 7 0 0 1 82.6 73H17A7 7 0 0 1 10 66Z" fill="#a3a3a3"/><path d="M22.2 9L34 9L40.7 22.2L28.9 22.2ZM42.2 9L54 9L60.4 22.2L48.1 22.2ZM62.2 9L73.7 9L80.4 22.2L68.1 22.2ZM40 31.1H67.8V56.3H63.7V35.6H44.4V56.3H40Z" fill="#8b8b8b"/><circle cx="37" cy="56.3" r="7.4" fill="#8b8b8b"/><circle cx="60.4" cy="56.3" r="7.4" fill="#8b8b8b"/></svg><svg class="a" style="left:1357.00px;top:887.00px;" width="45" height="45" viewBox="0 0 24 24"><path fill="#ffffff" d="M16.56,5.44L15.11,6.89C16.84,7.94 18,9.83 18,12A6,6 0 0,1 12,18A6,6 0 0,1 6,12C6,9.83 7.16,7.94 8.88,6.88L7.44,5.44C5.36,6.88 4,9.28 4,12A8,8 0 0,0 12,20A8,8 0 0,0 20,12C20,9.28 18.64,6.88 16.56,5.44M13,3H11V13H13"/></svg><svg class="a" style="left:1715.00px;top:895.00px;" width="30" height="30" viewBox="0 0 24 24"><path fill="#ffffff" fill-rule="nonzero" d="M22,16V4A2,2 0 0,0 20,2H8A2,2 0 0,0 6,4V16A2,2 0 0,0 8,18H20A2,2 0 0,0 22,16M12,14V6L18,10L12,14M2,6V20A2,2 0 0,0 4,22H18V20H4V6H2Z"/></svg><div class="a" style="left:1343px;top:951px;width:417px;height:135px;background:#8b8b8b;border-radius:5px;box-shadow:0 1px 2px rgba(0,0,0,.35)"></div><svg class="a" style="left:1363.00px;top:971.75px;" width="30" height="30" viewBox="0 0 24 24"><path fill="#ffffff" fill-rule="nonzero" d="M1,10V12A9,9 0 0,1 10,21H12C12,14.92 7.07,10 1,10M1,14V16A5,5 0 0,1 6,21H8A7,7 0 0,0 1,14M1,18V21H4A3,3 0 0,0 1,18M21,3H3C1.89,3 1,3.89 1,5V8H3V5H21V19H14V21H21A2,2 0 0,0 23,19V5C23,3.89 22.1,3 21,3Z"/></svg><div class="a t" style="top:978.71px;font-size:17.5px;line-height:17.5px;color:#ffffff;font-weight:400;left:1404.5px;">NestHub7951</div><svg class="a" style="left:1711.70px;top:964.00px;" width="36" height="36" viewBox="0 0 24 24"><path fill="#ffffff" fill-rule="nonzero" d="M12,16A2,2 0 0,1 14,18A2,2 0 0,1 12,20A2,2 0 0,1 10,18A2,2 0 0,1 12,16M12,10A2,2 0 0,1 14,12A2,2 0 0,1 12,14A2,2 0 0,1 10,12A2,2 0 0,1 12,10M12,4A2,2 0 0,1 14,6A2,2 0 0,1 12,8A2,2 0 0,1 10,6A2,2 0 0,1 12,4Z"/></svg><svg class="a" style="left:1606px;top:978px" width="100" height="80" viewBox="0 0 100 80"><path d="M10 17A8 8 0 0 1 18 9H89.6V66A7 7 0 0 1 82.6 73H17A7 7 0 0 1 10 66Z" fill="#a3a3a3"/><path d="M22.2 9L34 9L40.7 22.2L28.9 22.2ZM42.2 9L54 9L60.4 22.2L48.1 22.2ZM62.2 9L73.7 9L80.4 22.2L68.1 22.2ZM40 31.1H67.8V56.3H63.7V35.6H44.4V56.3H40Z" fill="#8b8b8b"/><circle cx="37" cy="56.3" r="7.4" fill="#8b8b8b"/><circle cx="60.4" cy="56.3" r="7.4" fill="#8b8b8b"/></svg><svg class="a" style="left:1357.00px;top:1032.00px;" width="45" height="45" viewBox="0 0 24 24"><path fill="#ffffff" d="M16.56,5.44L15.11,6.89C16.84,7.94 18,9.83 18,12A6,6 0 0,1 12,18A6,6 0 0,1 6,12C6,9.83 7.16,7.94 8.88,6.88L7.44,5.44C5.36,6.88 4,9.28 4,12A8,8 0 0,0 12,20A8,8 0 0,0 20,12C20,9.28 18.64,6.88 16.56,5.44M13,3H11V13H13"/></svg><svg class="a" style="left:1715.00px;top:1040.00px;" width="30" height="30" viewBox="0 0 24 24"><path fill="#ffffff" fill-rule="nonzero" d="M22,16V4A2,2 0 0,0 20,2H8A2,2 0 0,0 6,4V16A2,2 0 0,0 8,18H20A2,2 0 0,0 22,16M12,14V6L18,10L12,14M2,6V20A2,2 0 0,0 4,22H18V20H4V6H2Z"/></svg></div></body></html>
